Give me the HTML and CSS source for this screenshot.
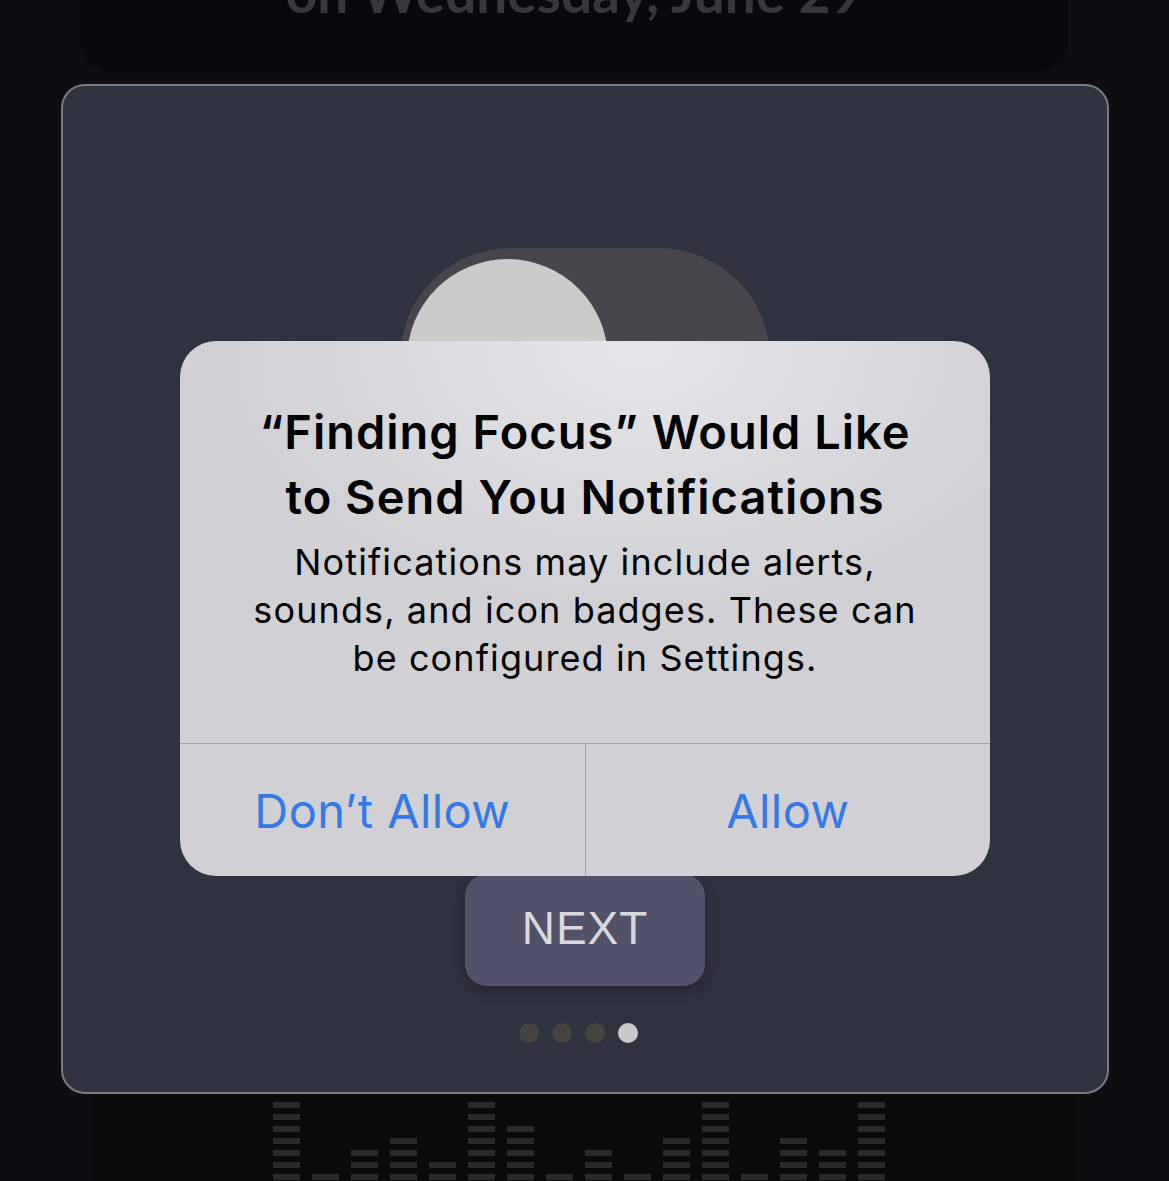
FILE: index.html
```html
<!DOCTYPE html>
<html lang="en">
<head>
    <meta charset="UTF-8">
    <meta name="viewport" content="width=device-width, initial-scale=1.0">
    <title>Finding Focus</title>
    <link rel="stylesheet" href="styles.css">
</head>
<body>

<div class="date-card">
    <div class="date-text">on Wednesday, June 29</div>
</div>

<div class="onboarding">
    <div class="toggle">
        <div class="knob"></div>
    </div>

    <button class="next-btn">NEXT</button>

    <div class="dots">
        <span class="dot"></span>
        <span class="dot"></span>
        <span class="dot"></span>
        <span class="dot active"></span>
    </div>
</div>

<!-- equalizer strip under the card -->
<div class="levels">
    <div class="col"><i></i><i></i><i></i><i></i><i></i><i></i><i></i></div>
    <div class="col"><i></i></div>
    <div class="col"><i></i><i></i><i></i></div>
    <div class="col"><i></i><i></i><i></i><i></i></div>
    <div class="col"><i></i><i></i></div>
    <div class="col"><i></i><i></i><i></i><i></i><i></i><i></i><i></i></div>
    <div class="col"><i></i><i></i><i></i><i></i><i></i></div>
    <div class="col"><i></i></div>
    <div class="col"><i></i><i></i><i></i></div>
    <div class="col"><i></i></div>
    <div class="col"><i></i><i></i><i></i><i></i></div>
    <div class="col"><i></i><i></i><i></i><i></i><i></i><i></i><i></i></div>
    <div class="col"><i></i></div>
    <div class="col"><i></i><i></i><i></i><i></i></div>
    <div class="col"><i></i><i></i><i></i></div>
    <div class="col"><i></i><i></i><i></i><i></i><i></i><i></i><i></i></div>
</div>

<!-- system permission alert -->
<div class="alert">
    <div class="alert-body">
        <h2>&ldquo;Finding Focus&rdquo; Would Like to Send You Notifications</h2>
        <p>Notifications may include alerts, sounds, and icon badges. These can be configured in Settings.</p>
    </div>
    <div class="alert-actions">
        <button>Don&rsquo;t Allow</button>
        <button>Allow</button>
    </div>
</div>

</body>
</html>
```

FILE: styles.css
```css
body { margin: 0; background: #0e0e12; height: 1181px; overflow: hidden; font-family: Inter, "Noto Sans", sans-serif; }

/* Top date card (scrolled mostly off screen) */
.date-card { height: 72px; margin: 0 101px 0 80px; background: #09090d; border-radius: 0 0 30px 30px; overflow: hidden; }
.date-text { margin-top: -43px; text-align: center; font-family: Lato, sans-serif; font-weight: 700; font-size: 55px; line-height: 70px; color: #38383c; }

/* Onboarding card */
.onboarding { margin: 12px 60px 0 61px; height: 1010px; background: #313240; border: 2px solid #7a7a80; border-radius: 24px; display: flex; flex-direction: column; align-items: center; padding-top: 162px; box-sizing: border-box; }
.toggle { width: 370px; height: 222px; border-radius: 111px; background: #47464c; padding: 11px 0 0 7px; box-sizing: border-box; }
.knob { width: 201px; height: 201px; border-radius: 50%; background: #cbcbcb; }

.next-btn { margin-top: 404px; width: 240px; height: 112px; border: 0; border-radius: 22px; background: #52516a; color: #d9d9dd; font-family: "Liberation Sans", Arial, sans-serif; font-size: 46px; letter-spacing: 1px; padding: 0 0 4px; box-shadow: 0 4px 14px rgba(0, 0, 0, 0.3); }

.dots { display: flex; gap: 13px; margin: 37px 14px 0 0; }
.dot { width: 20px; height: 20px; border-radius: 50%; background: #44453f; }
.dot.active { background: #c9c9cc; }

/* Equalizer strip */
.levels { margin: 0 90px; height: 90px; background: #0a0a0d; display: flex; gap: 12px; padding: 2px 0 0 183px; box-sizing: border-box; }
.col { width: 27px; height: 84px; display: flex; flex-direction: column; justify-content: flex-end; }
.col i { display: block; height: 6px; margin-top: 6px; background: #29292d; }

/* Permission alert */
.alert { position: absolute; left: 180px; top: 341px; width: 810px; height: 535px; border-radius: 36px; overflow: hidden; background: radial-gradient(ellipse 420px 260px at 460px 10px, #e6e6ea, rgba(230, 230, 234, 0) 100%), #d0d0d5; display: flex; flex-direction: column; }
.alert-body { height: 402px; padding: 58px 60px 0; box-sizing: border-box; text-align: center; color: #000; }
.alert-body h2 { margin: 0 10px; font-size: 47px; font-weight: 600; line-height: 65px; letter-spacing: 1px; }
.alert-body p { margin: 9px 0 0; font-size: 36px; line-height: 48px; letter-spacing: 1.1px; }
.alert-actions { flex: 1; display: flex; border-top: 1px solid #a3a3a8; }
.alert-actions button { flex: 1; border: 0; background: transparent; font-family: Inter, "Noto Sans", sans-serif; font-size: 47px; letter-spacing: 0.4px; color: #3479ea; padding: 0; }
.alert-actions button + button { border-left: 1px solid #a3a3a8; }
```
